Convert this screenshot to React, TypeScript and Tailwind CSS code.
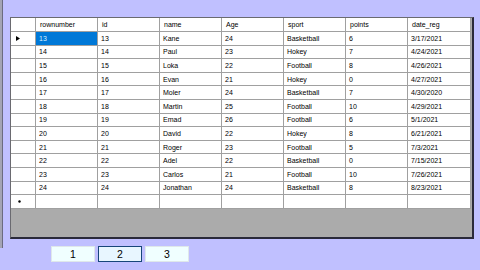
import React from "react";

const cols = ["rownumber", "id", "name", "Age", "sport", "points", "date_reg"];
const rows: string[][] = [
  ["13", "13", "Kane", "24", "Basketball", "6", "3/17/2021"],
  ["14", "14", "Paul", "23", "Hokey", "7", "4/24/2021"],
  ["15", "15", "Loka", "22", "Football", "8", "4/26/2021"],
  ["16", "16", "Evan", "21", "Hokey", "0", "4/27/2021"],
  ["17", "17", "Moler", "24", "Basketball", "7", "4/30/2020"],
  ["18", "18", "Martin", "25", "Football", "10", "4/29/2021"],
  ["19", "19", "Emad", "26", "Football", "6", "5/1/2021"],
  ["20", "20", "David", "22", "Hokey", "8", "6/21/2021"],
  ["21", "21", "Roger", "23", "Football", "5", "7/3/2021"],
  ["22", "22", "Adel", "22", "Basketball", "0", "7/15/2021"],
  ["23", "23", "Carlos", "21", "Football", "10", "7/26/2021"],
  ["24", "24", "Jonathan", "24", "Basketball", "8", "8/23/2021"],
];

const font = { fontFamily: '"Liberation Sans", Arial, sans-serif' };

function Cell({ text, last, selected }: { text: string; last: boolean; selected?: boolean }) {
  return (
    <div
      className={
        (last ? "w-[63px] " : "w-[62px] ") +
        "h-full flex items-center pl-[3px] border-r border-b border-[#a0a0a0] whitespace-nowrap overflow-hidden " +
        (selected ? "bg-[#0078d7] text-[#d6efff]" : "bg-white text-black")
      }
    >
      {text}
    </div>
  );
}

export default function App() {
  return (
    <div className="w-[480px] h-[270px] bg-[#c0c0ff] flex overflow-hidden text-[7px] leading-none" style={font}>
      <div className="w-[2px] h-[248px] bg-[#a4a4b4] border-r border-[#6b6b80] box-content" />
      <div className="flex flex-col pl-[7px] pt-[17px]">
        <div className="w-[464px] h-[222px] flex flex-col border-t border-l border-[#6a6a70] border-r-2 border-b-2 border-r-[#2a2a3a] border-b-[#2a2a3a] bg-[#ababab]">
          <div className="flex h-[14px]">
            <div className="w-[25px] h-full bg-white border-r border-b border-[#a0a0a0]" />
            {cols.map((c, i) => (
              <div
                key={c}
                className={
                  (i === cols.length - 1 ? "w-[63px] " : "w-[62px] ") +
                  "h-full flex items-center pl-[4px] bg-white border-r border-b border-[#a0a0a0] text-black"
                }
              >
                {c}
              </div>
            ))}
          </div>
          {rows.map((r, ri) => (
            <div key={ri} className="flex h-[13.6px]">
              <div className="w-[25px] h-full bg-white border-r border-b border-[#a0a0a0] flex items-center pl-[5px]">
                {ri === 0 && (
                  <svg width="4" height="5" viewBox="0 0 4 5">
                    <path d="M0 0 L4 2.5 L0 5 Z" fill="#000" />
                  </svg>
                )}
              </div>
              {r.map((v, ci) => (
                <Cell key={ci} text={v} last={ci === r.length - 1} selected={ri === 0 && ci === 0} />
              ))}
            </div>
          ))}
          <div className="flex h-[13.6px]">
            <div className="w-[25px] h-full bg-white border-r border-b border-[#a0a0a0] flex items-center pl-[7px]">
              <svg width="3" height="3" viewBox="0 0 3 3">
                <circle cx="1.5" cy="1.5" r="1.2" fill="#000" />
              </svg>
            </div>
            {cols.map((c, ci) => (
              <Cell key={c} text="" last={ci === cols.length - 1} />
            ))}
          </div>
          <div className="flex-1" />
        </div>
        <div className="flex gap-[3px] mt-[7px] ml-[41px] text-[10.5px] text-black">
          <div className="w-[44px] h-[16px] flex items-center justify-center bg-[#f0ffff] border border-[#dfe8ea]">1</div>
          <div className="w-[44px] h-[16px] flex items-center justify-center bg-[#e8f6ff] border border-[#17467a]">2</div>
          <div className="w-[44px] h-[16px] flex items-center justify-center bg-[#f0ffff] border border-[#dfe8ea]">3</div>
        </div>
      </div>
    </div>
  );
}
